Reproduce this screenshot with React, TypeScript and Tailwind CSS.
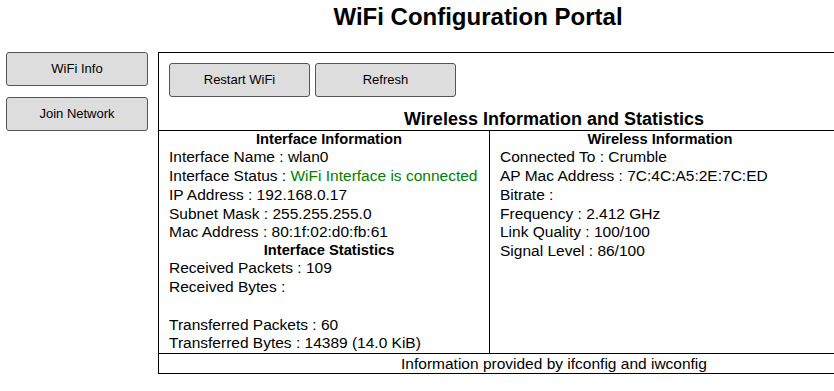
import React from 'react';

const leftRows: { label: string; value?: string; green?: boolean }[] = [
  { label: 'Interface Name', value: 'wlan0' },
  { label: 'Interface Status', value: 'WiFi Interface is connected', green: true },
  { label: 'IP Address', value: '192.168.0.17' },
  { label: 'Subnet Mask', value: '255.255.255.0' },
  { label: 'Mac Address', value: '80:1f:02:d0:fb:61' },
];

const statRows = [
  { label: 'Received Packets', value: '109' },
  { label: 'Received Bytes', value: '' },
  { label: '', value: '' },
  { label: 'Transferred Packets', value: '60' },
  { label: 'Transferred Bytes', value: '14389 (14.0 KiB)' },
];

const wirelessRows = [
  { label: 'Connected To', value: 'Crumble' },
  { label: 'AP Mac Address', value: '7C:4C:A5:2E:7C:ED' },
  { label: 'Bitrate', value: '' },
  { label: 'Frequency', value: '2.412 GHz' },
  { label: 'Link Quality', value: '100/100' },
  { label: 'Signal Level', value: '86/100' },
];

function Btn({ children, w }: { children: React.ReactNode; w: string }) {
  return (
    <button
      className={`${w} h-[34px] border border-[#555] rounded-[3px] bg-[#dddddd] text-[13px] text-black`}
    >
      {children}
    </button>
  );
}

function Row({ label, value, green }: { label: string; value?: string; green?: boolean }) {
  if (!label) return <div className="h-[18.75px]" />;
  return (
    <div className="leading-[18.75px] whitespace-nowrap">
      {label} : {value && <span className={green ? 'text-[#008000]' : ''}>{value}</span>}
    </div>
  );
}

function Head({ children }: { children: React.ReactNode }) {
  return <div className="text-center font-bold text-[14.7px] leading-[17.25px]">{children}</div>;
}

export default function App() {
  return (
    <div className="w-[834px] h-[391px] overflow-hidden bg-white text-black">
      <div className="w-[956px] font-['Liberation_Sans',Arial,sans-serif]">
        <h1 className="pt-[3px] text-[24px] leading-[28px] font-bold text-center">WiFi Configuration Portal</h1>

        <div className="mt-[21px] flex items-start">
          {/* sidebar */}
          <div className="ml-[6px] w-[142px] flex flex-col gap-[11px]">
            <Btn w="w-[142px]">WiFi Info</Btn>
            <Btn w="w-[142px]">Join Network</Btn>
          </div>

          {/* main panel */}
          <div className="ml-[10px] w-[792px] border border-black">
            <div className="pl-[10px] pt-[10px] flex gap-[5px]">
              <Btn w="w-[141px]">Restart WiFi</Btn>
              <Btn w="w-[141px]">Refresh</Btn>
            </div>
            <h2 className="mt-[11px] text-[18px] leading-[22px] font-bold text-center">
              Wireless Information and Statistics
            </h2>

            <div className="border-t border-black text-[15.5px]">
              <div className="flex">
                <div className="w-[331px] border-r border-black pl-[10px]">
                  <Head>Interface Information</Head>
                  {leftRows.map(r => <Row key={r.label} {...r} />)}
                  <Head>Interface Statistics</Head>
                  {statRows.map((r, i) => <Row key={i} {...r} />)}
                </div>
                <div className="w-[330px] pl-[10px]">
                  <Head>Wireless Information</Head>
                  {wirelessRows.map(r => <Row key={r.label} {...r} />)}
                </div>
              </div>
              <div className="border-t border-black text-center leading-[19px]">
                Information provided by ifconfig and iwconfig
              </div>
            </div>
          </div>
        </div>
      </div>
    </div>
  );
}
